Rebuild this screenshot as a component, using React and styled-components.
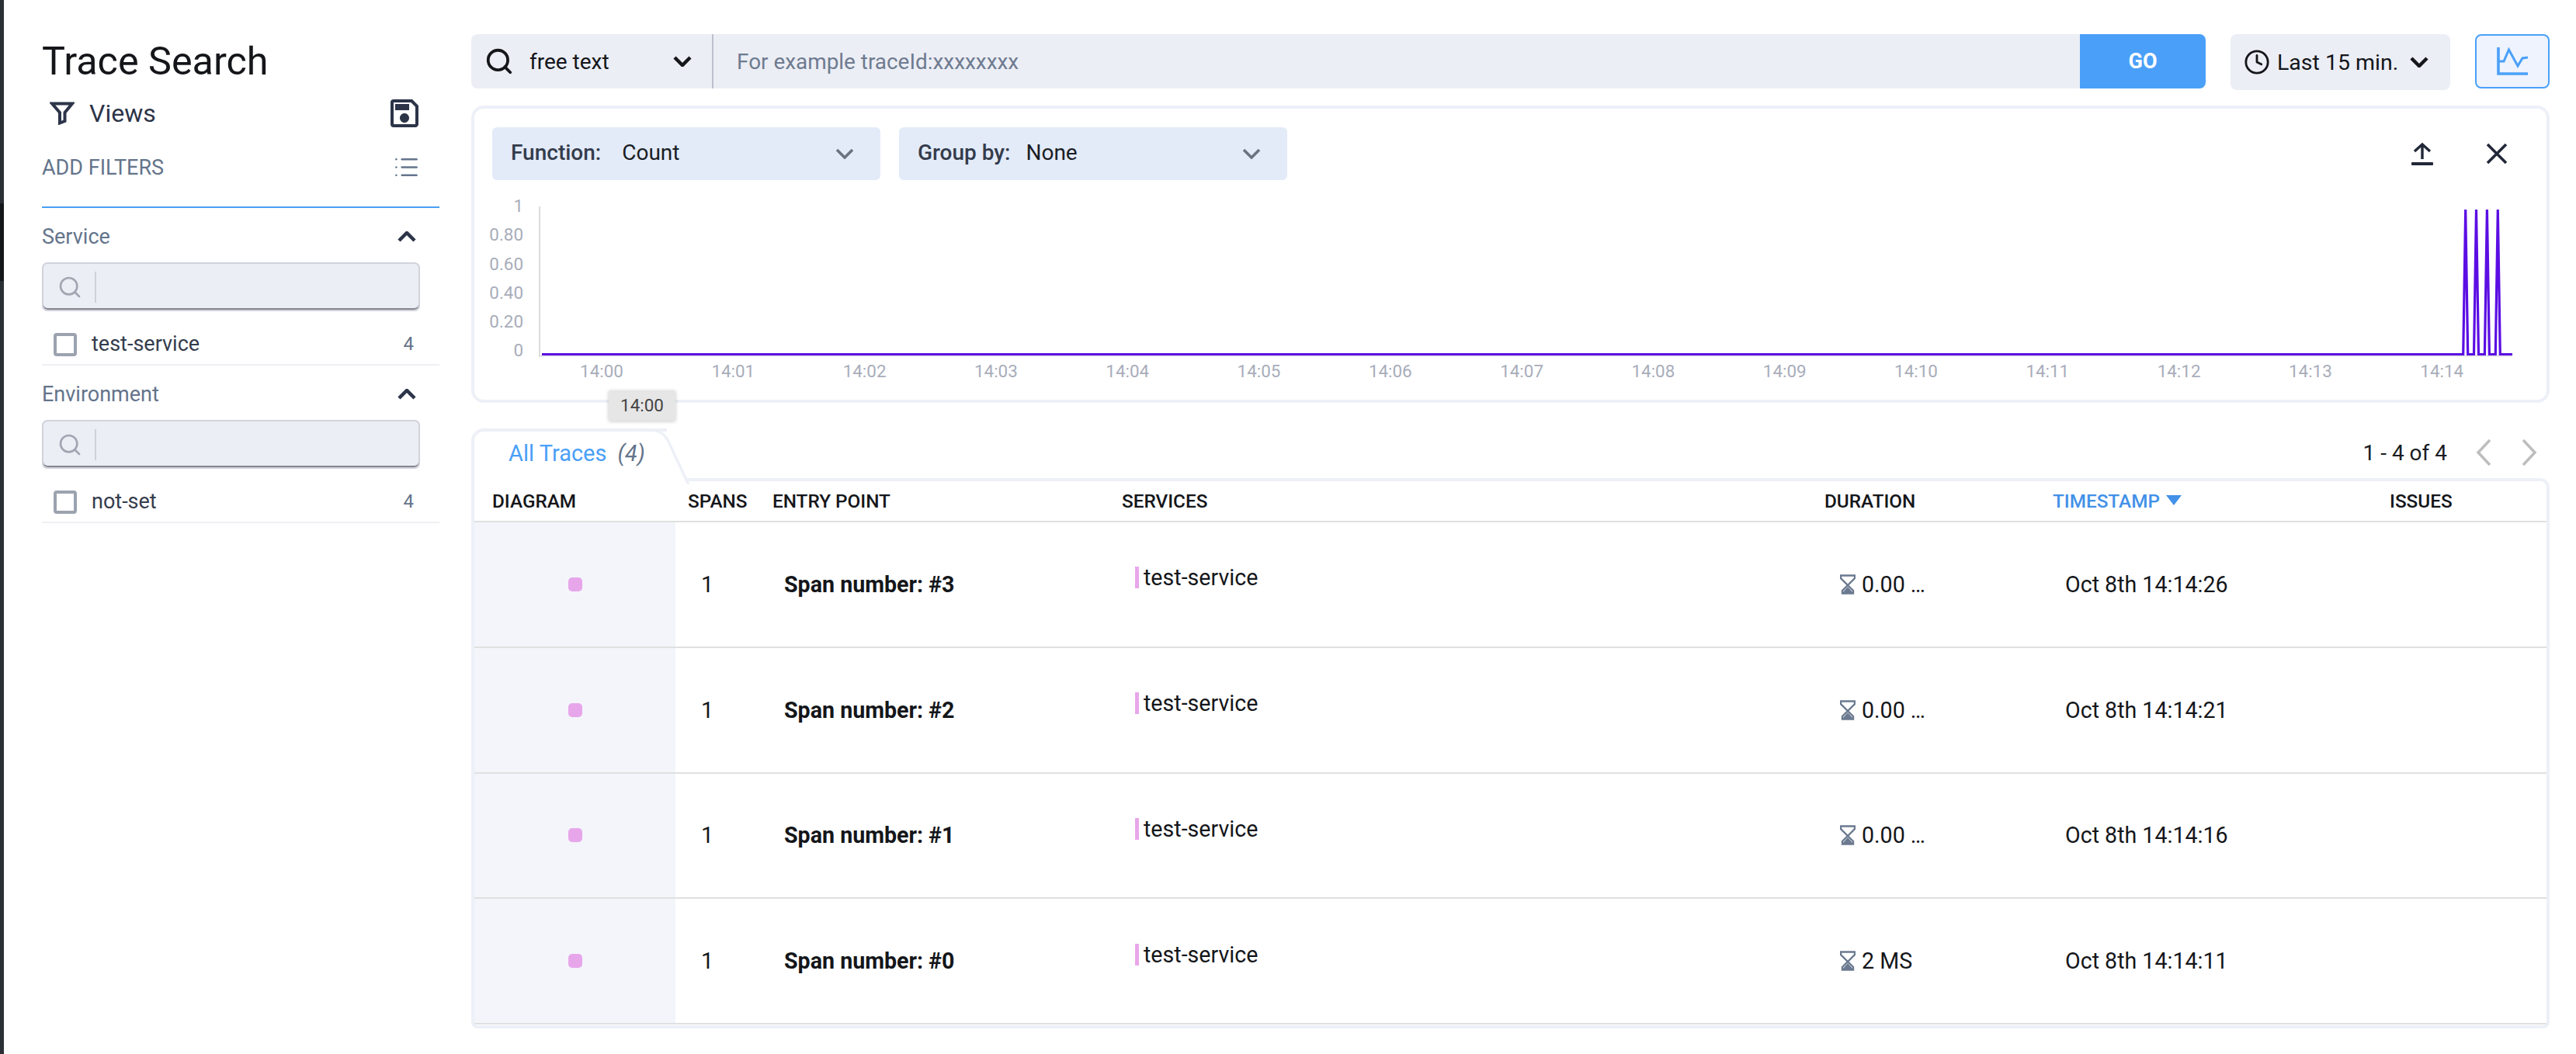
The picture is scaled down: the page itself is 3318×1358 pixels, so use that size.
import React from 'react'
import styled, { createGlobalStyle } from 'styled-components'
import { Search, Clock, List } from 'lucide-react'
import { MdOutlineSave } from 'react-icons/md'

const GlobalStyle = createGlobalStyle`
  html, body { margin: 0; padding: 0; background: #fff; }
  body { font-family: Roboto, "Liberation Sans", sans-serif; overflow: hidden; }
  * { box-sizing: border-box; }
`

const ROWS = [
  { id: 3, duration: '0.00 …', time: 'Oct 8th 14:14:26' },
  { id: 2, duration: '0.00 …', time: 'Oct 8th 14:14:21' },
  { id: 1, duration: '0.00 …', time: 'Oct 8th 14:14:16' },
  { id: 0, duration: '2 MS', time: 'Oct 8th 14:14:11' },
]

const COLUMNS = '259px 109px 450px 905px 294px 434px 218px'
const Y_TICKS = [['1', 265], ['0.80', 302], ['0.60', 340], ['0.40', 377], ['0.20', 414], ['0', 451]]
const X_TICKS = Array.from({ length: 15 }, (_, i) => '14:' + String(i).padStart(2, '0'))
const SPIKES = [3175.7, 3189.5, 3203.4, 3217.3]

const Page = styled.div`
  display: flex;
  width: 3318px;
  height: 1358px;
`

const EdgeStrip = styled.div`
  width: 5px;
  flex-shrink: 0;
  background: linear-gradient(#2a2e35 0 262px, #14171a 262px 362px, #2a2e35 362px);
`

const Sidebar = styled.aside`
  width: 561px;
  flex-shrink: 0;
  padding: 49px 0 0 49px;
`

const Title = styled.h1`
  margin: 0;
  height: 60px;
  font-size: 50.3px;
  line-height: 60px;
  font-weight: 400;
  color: #14161a;
`

const ViewsRow = styled.div`
  display: flex;
  align-items: center;
  justify-content: space-between;
  height: 36px;
  margin-top: 19px;
  width: 491px;
  padding-left: 10px;
  color: #2c3448;
`

const ViewsLabel = styled.div`
  display: flex;
  align-items: center;
  gap: 19px;
  font-size: 32px;
  line-height: 36px;
`

const FilterHeader = styled.div`
  display: flex;
  justify-content: space-between;
  height: 68px;
  margin-top: 36px;
  padding-right: 27px;
  border-bottom: 2px solid #4aa0f5;
  font-size: 27px;
  line-height: 32px;
  color: #64748b;
  svg { margin-top: -2px; margin-right: -2px; }
`

const GroupHeader = styled.div`
  display: flex;
  align-items: center;
  justify-content: space-between;
  height: 30px;
  margin-top: 22px;
  width: 482px;
  font-size: 27px;
  color: #64748b;
`

const FilterInput = styled.div`
  display: flex;
  align-items: center;
  width: 487px;
  height: 63px;
  margin-top: 18px;
  padding-left: 18px;
  background: #eceef5;
  border: 2px solid #d0d2dc;
  border-radius: 7px;
  box-shadow: inset 0 -2px 0 #85868f;
  color: #a2a6b2;
`

const InputDivider = styled.span`
  width: 2px;
  height: 40px;
  margin-left: 16px;
  background: #cfd1d9;
`

const FilterOption = styled.div`
  display: flex;
  align-items: flex-start;
  height: 70px;
  padding: 28px 33px 0 15px;
  border-bottom: 2px solid #eef0f4;
  font-size: 27px;
  line-height: 28px;
  color: #343c4c;
`

const Checkbox = styled.span`
  width: 30px;
  height: 30px;
  margin-right: 19px;
  border: 4px solid #9ca3af;
  border-radius: 4px;
`

const OptionCount = styled.span`
  margin-left: auto;
  font-size: 24px;
  color: #64748b;
`

const Main = styled.main`
  width: 2677px;
  margin-left: 41px;
  padding-top: 44px;
`

const TopBar = styled.div`
  display: flex;
  align-items: flex-start;
  height: 72px;
`

const SearchBar = styled.div`
  display: flex;
  align-items: center;
  width: 2234px;
  height: 70px;
  background: #eceef5;
  border-radius: 8px;
`

const TypeSelect = styled.div`
  display: flex;
  align-items: center;
  width: 312px;
  height: 100%;
  padding: 0 26px 0 17px;
  border-right: 2px solid #bcc1cc;
  font-size: 28px;
  color: #14161a;
  span { margin: 0 auto 0 20px; }
`

const Placeholder = styled.div`
  flex: 1;
  padding-left: 30px;
  font-size: 27.9px;
  color: #6e7b90;
`

const GoButton = styled.button`
  width: 162px;
  height: 100%;
  border: 0;
  border-radius: 0 8px 8px 0;
  background: #4aa0f8;
  color: #fff;
  font: 700 27px Roboto, sans-serif;
`

const TimeSelect = styled.div`
  display: flex;
  align-items: center;
  width: 283px;
  height: 72px;
  margin-left: 32px;
  padding-left: 17px;
  background: #eceef5;
  border-radius: 8px;
  font-size: 28.5px;
  color: #14161a;
  span { margin: 0 15px 0 9px; }
`

const ChartToggle = styled.button`
  display: flex;
  align-items: center;
  justify-content: center;
  width: 96px;
  height: 70px;
  margin-left: 32px;
  padding: 0;
  background: #eef3fd;
  border: 2px solid #4aa0f8;
  border-radius: 8px;
`

const ChartPanel = styled.section`
  position: relative;
  height: 383px;
  margin-top: 20px;
  border: 4px solid #edf0f7;
  border-radius: 16px;
`

const ChartControls = styled.div`
  display: flex;
  align-items: center;
  gap: 24px;
  height: 68px;
  margin: 24px 50px 0 23px;
`

const ChartSelect = styled.div`
  display: flex;
  align-items: center;
  width: 500px;
  height: 68px;
  padding: 0 34px 3px 24px;
  background: #e3ebf9;
  border-radius: 6px;
  font-size: 28px;
  color: #1a1d24;
  b { font-weight: 500; color: #343c4c; margin-right: ${(p) => p.$gap}px; }
  svg { margin: 3px 0 0 auto; }
`

const ChartActions = styled.div`
  display: flex;
  align-items: center;
  gap: 68px;
  margin-left: auto;
`

const ChartSvg = styled.svg`
  display: block;
  margin-top: 8px;
`

const AxisText = styled.text`
  font-family: Roboto, sans-serif;
  font-size: 22.4px;
  fill: #a8adba;
`

const Tooltip = styled.div`
  position: absolute;
  left: 173px;
  top: 363px;
  z-index: 3;
  width: 86px;
  height: 39px;
  background: #e6e6e6;
  border-radius: 2px;
  box-shadow: 0 1px 5px rgba(0, 0, 0, 0.22);
  font-size: 22.4px;
  line-height: 39px;
  text-align: center;
  color: #444;
`

const TabsRow = styled.div`
  display: flex;
  justify-content: space-between;
  height: 68px;
  margin-top: 33px;
`

const Tab = styled.div`
  position: relative;
  z-index: 2;
  width: 252px;
  height: 68px;
  padding: 8px 0 0 44px;
  background: #fff;
  border: 4px solid #edf0f7;
  border-width: 4px 0 0 4px;
  border-radius: 16px 0 0 0;
  font-size: 29px;
  line-height: 40px;
  color: #4aa0f8;
  em { margin-left: 14px; color: #64748b; }
  &::after {
    content: '';
    position: absolute;
    top: -4px;
    right: -13px;
    width: 34px;
    height: 68px;
    background: #fff;
    border: 4px solid #edf0f7;
    border-width: 4px 4px 0 0;
    border-radius: 0 16px 0 0;
    transform: skewX(25deg);
    z-index: -1;
  }
`

const Pager = styled.div`
  display: flex;
  align-items: center;
  height: 50px;
  padding: 12px 16px 0 0;
  font-size: 28px;
  color: #1a1d24;
  span { margin-right: 37px; }
  svg + svg { margin-left: 37px; }
`

const TablePanel = styled.section`
  margin-top: -4px;
  height: 709px;
  border: 4px solid #edf0f7;
  border-radius: 0 12px 8px 8px;
`

const HeaderRow = styled.div`
  display: grid;
  grid-template-columns: ${COLUMNS};
  height: 53px;
  border-bottom: 2px solid #e0e0e0;
`

const HeaderCell = styled.div`
  display: flex;
  align-items: center;
  gap: 8px;
  padding-left: ${(p) => p.$indent ?? 16}px;
  font-size: 24.3px;
  font-weight: 500;
  color: ${(p) => (p.$active ? '#4391e8' : '#14161a')};
`

const SortArrow = styled.i`
  width: 0;
  height: 0;
  margin-top: -3px;
  border-left: 10px solid transparent;
  border-right: 10px solid transparent;
  border-top: 13px solid #4391e8;
`

const BodyRow = styled.div`
  display: grid;
  grid-template-columns: ${COLUMNS};
  height: 161.8px;
  border-bottom: 2px solid #e0e0e0;
`

const DiagramCell = styled.div`
  display: flex;
  align-items: center;
  justify-content: center;
  background: #f3f5fb;
`

const SpanMark = styled.span`
  width: 18px;
  height: 18px;
  background: #e8a6ea;
  border-radius: 5px;
`

const Cell = styled.div`
  display: flex;
  align-items: center;
  padding-left: ${(p) => p.$indent}px;
  font-size: 28.6px;
  font-weight: ${(p) => (p.$bold ? 700 : 400)};
  color: #14161a;
`

const ServiceTag = styled.div`
  display: flex;
  align-items: center;
  height: 28px;
  margin-bottom: 17px;
  padding-left: 6px;
  border-left: 5px solid #e8a6ea;
`

const Chevron = ({ width = 24, height = 14, color = '#14161a', stroke = 4.5, up }) => (
  <svg width={width} height={height} viewBox="0 0 24 14" preserveAspectRatio="none" style={up ? { transform: 'rotate(180deg)' } : undefined}>
    <path d="M2 2 12 12 22 2" fill="none" stroke={color} strokeWidth={stroke} />
  </svg>
)

const PagerArrow = ({ flip }) => (
  <svg width="21" height="34" viewBox="0 0 21 34">
    <path d={flip ? 'M3 1 18 17 3 33' : 'M18 1 3 17 18 33'} fill="none" stroke="#bdbdbd" strokeWidth="3.5" />
  </svg>
)

const FunnelIcon = () => (
  <svg width="32" height="30" viewBox="0 0 32 30">
    <path d="M3 2.5H29L19.5 14V25L13 27.5V14Z" fill="none" stroke="#2c3448" strokeWidth="4" />
  </svg>
)

const UploadIcon = () => (
  <svg width="28" height="30" viewBox="0 0 28 30">
    <path d="M14 22V3M4 12 14 3l10 9" fill="none" stroke="#222838" strokeWidth="3.4" />
    <rect y="26" width="28" height="4" rx="1" fill="#222838" />
  </svg>
)

const CloseIcon = () => (
  <svg width="28" height="28" viewBox="0 0 28 28">
    <path d="M2 2 26 26M26 2 2 26" stroke="#222838" strokeWidth="3.6" />
  </svg>
)

const LineChartIcon = () => (
  <svg width="40" height="36" viewBox="0 0 40 36">
    <path d="M2 0V34H40" fill="none" stroke="#4aa0f8" strokeWidth="3.6" />
    <path d="M2 18H9L15.5 3 27 24 33 14 40 13" fill="none" stroke="#4aa0f8" strokeWidth="3" />
  </svg>
)

const Hourglass = () => (
  <svg width="20" height="26" viewBox="0 0 20 26" style={{ marginRight: 8 }}>
    <path d="M1 1.5H19V5L3 21V24.5H17V21L1 5Z" fill="none" stroke="#6b7a90" strokeWidth="2.4" />
    <path d="M2 25 10 16 18 25Z" fill="#6b7a90" />
  </svg>
)

function App() {
  return (
    <Page>
      <GlobalStyle />
      <EdgeStrip />
      <Sidebar>
        <Title>Trace Search</Title>
        <ViewsRow>
          <ViewsLabel><FunnelIcon />Views</ViewsLabel>
          <MdOutlineSave size={48} />
        </ViewsRow>
        <FilterHeader>
          ADD FILTERS
          <List size={35} strokeWidth={1.7} />
        </FilterHeader>

        <GroupHeader>
          Service
          <Chevron color="#2c3448" up />
        </GroupHeader>
        <FilterInput>
          <Search size={32} strokeWidth={2} />
          <InputDivider />
        </FilterInput>
        <FilterOption>
          <Checkbox />
          test-service
          <OptionCount>4</OptionCount>
        </FilterOption>

        <GroupHeader>
          Environment
          <Chevron color="#2c3448" up />
        </GroupHeader>
        <FilterInput>
          <Search size={32} strokeWidth={2} />
          <InputDivider />
        </FilterInput>
        <FilterOption>
          <Checkbox />
          not-set
          <OptionCount>4</OptionCount>
        </FilterOption>
      </Sidebar>

      <Main>
        <TopBar>
          <SearchBar>
            <TypeSelect>
              <Search size={38} strokeWidth={2.4} color="#14161a" />
              <span>free text</span>
              <Chevron />
            </TypeSelect>
            <Placeholder>For example traceId:xxxxxxxx</Placeholder>
            <GoButton>GO</GoButton>
          </SearchBar>
          <TimeSelect>
            <Clock size={34} strokeWidth={2} />
            <span>Last 15 min.</span>
            <Chevron />
          </TimeSelect>
          <ChartToggle><LineChartIcon /></ChartToggle>
        </TopBar>

        <ChartPanel>
          <ChartControls>
            <ChartSelect $gap={27}>
              <b>Function:</b>Count
              <Chevron color="#6b7280" stroke={3.6} />
            </ChartSelect>
            <ChartSelect $gap={20}>
              <b>Group by:</b>None
              <Chevron color="#6b7280" stroke={3.6} />
            </ChartSelect>
            <ChartActions>
              <UploadIcon />
              <CloseIcon />
            </ChartActions>
          </ChartControls>
          <ChartSvg width="2669" height="275" viewBox="611 240 2669 275">
            <path d="M695 266V460" stroke="#dcdcdc" strokeWidth="2" />
            <path d="M695 458.5H3236" stroke="#e2e2e2" strokeWidth="2" />
            {Y_TICKS.map(([label, y]) => (
              <AxisText key={label} x="674" y={y + 8} textAnchor="end">{label}</AxisText>
            ))}
            {X_TICKS.map((label, i) => (
              <AxisText key={label} x={775 + i * 169.3} y="486" textAnchor="middle">{label}</AxisText>
            ))}
            <polyline
              points={`698,456.5 ${SPIKES.map((x) => `${x - 3},456.5 ${x},270 ${x + 3},456.5`).join(' ')} 3236,456.5`}
              fill="none"
              stroke="#5b0ee3"
              strokeWidth="3.2"
              strokeMiterlimit="2"
            />
          </ChartSvg>
          <Tooltip>14:00</Tooltip>
        </ChartPanel>

        <TabsRow>
          <Tab>All Traces<em>(4)</em></Tab>
          <Pager>
            <span>1 - 4 of 4</span>
            <PagerArrow />
            <PagerArrow flip />
          </Pager>
        </TabsRow>

        <TablePanel>
          <HeaderRow>
            <HeaderCell $indent={23}>DIAGRAM</HeaderCell>
            <HeaderCell>SPANS</HeaderCell>
            <HeaderCell>ENTRY POINT</HeaderCell>
            <HeaderCell>SERVICES</HeaderCell>
            <HeaderCell>DURATION</HeaderCell>
            <HeaderCell $active>TIMESTAMP<SortArrow /></HeaderCell>
            <HeaderCell>ISSUES</HeaderCell>
          </HeaderRow>
          {ROWS.map((row) => (
            <BodyRow key={row.id}>
              <DiagramCell><SpanMark /></DiagramCell>
              <Cell $indent={33}>1</Cell>
              <Cell $indent={31} $bold>Span number: #{row.id}</Cell>
              <Cell $indent={33}><ServiceTag>test-service</ServiceTag></Cell>
              <Cell $indent={36}><Hourglass />{row.duration}</Cell>
              <Cell $indent={32}>{row.time}</Cell>
              <Cell $indent={16} />
            </BodyRow>
          ))}
        </TablePanel>
      </Main>
    </Page>
  )
}

export default App
